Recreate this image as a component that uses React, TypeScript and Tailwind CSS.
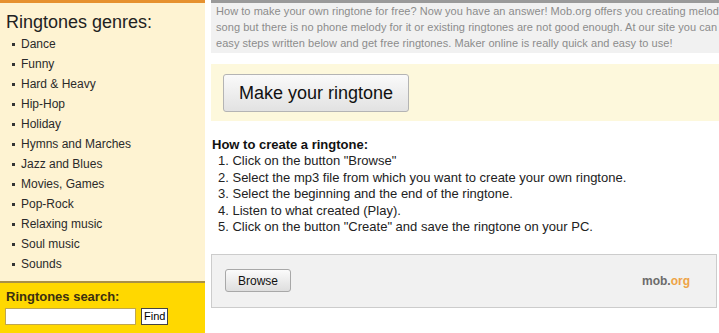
import React from 'react';

const genres = [
  'Dance',
  'Funny',
  'Hard & Heavy',
  'Hip-Hop',
  'Holiday',
  'Hymns and Marches',
  'Jazz and Blues',
  'Movies, Games',
  'Pop-Rock',
  'Relaxing music',
  'Soul music',
  'Sounds',
];

const steps = [
  'Click on the button "Browse"',
  'Select the mp3 file from which you want to create your own ringtone.',
  'Select the beginning and the end of the ringtone.',
  'Listen to what created (Play).',
  'Click on the button "Create" and save the ringtone on your PC.',
];

export default function App() {
  return (
    <div className="w-[719px] h-[333px] overflow-hidden flex bg-white font-['Liberation_Sans',Arial,sans-serif]">
      {/* Sidebar */}
      <div className="w-[205px] shrink-0 flex flex-col">
        <div className="flex-1 bg-[#fef3d2] border-t-[3px] border-[#e6912f] pt-[9px]">
          <h2 className="pl-[6px] text-[18px] leading-[21px] text-[#222]">Ringtones genres:</h2>
          <ul className="mt-[1px]">
            {genres.map((g) => (
              <li key={g} className="flex items-center h-[20px] text-[12px] text-[#2a2a2a]">
                <span className="ml-[12px] mr-[6px] w-[3px] h-[3px] bg-[#333]"></span>
                {g}
              </li>
            ))}
          </ul>
        </div>
        <div className="h-[52px] bg-[#ffd800] border-t-2 border-[#a89048] pt-[6px] pl-[5px]">
          <div className="text-[13px] leading-[16px] font-bold text-[#3b2f10] pl-[1px]">Ringtones search:</div>
          <div className="flex items-center mt-[3px] gap-[5px]">
            <input
              type="text"
              className="w-[131px] h-[17px] bg-white border border-[#bfa650] outline-none"
            />
            <button className="h-[17px] px-[2px] bg-white border border-[#444] text-[11px] leading-[15px] text-black">
              Find
            </button>
          </div>
        </div>
      </div>

      {/* Main */}
      <div className="w-[560px] shrink-0 ml-[6px]">
        <div className="border-t-[3px] border-[#9a9a9a] bg-[#f1f1f1] pb-[2px] pl-[5px] text-[11px] leading-[16px] tracking-[0.05px] text-[#8c8c8c] whitespace-nowrap">
          <p>How to make your own ringtone for free? Now you have an answer! Mob.org offers you creating melody for your favorite</p>
          <p>song but there is no phone melody for it or existing ringtones are not good enough. At our site you can make it in a few</p>
          <p>easy steps written below and get free ringtones. Maker online is really quick and easy to use!</p>
        </div>

        <div className="mt-[11px] bg-[#fdf8dc] pt-[10px] pb-[9px] pl-[12px]">
          <button className="w-[186px] h-[38px] rounded-[3px] border border-[#b4b4b4] bg-gradient-to-b from-[#fafafa] to-[#e2e2e2] text-[18px] text-[#111]">
            Make your ringtone
          </button>
        </div>

        <div className="mt-[16px] pl-[1px]">
          <h3 className="text-[13px] leading-[16px] font-bold text-[#111]">How to create a ringtone:</h3>
          <ol className="text-[13px] leading-[16.5px] text-[#222] pl-[6px]">
            {steps.map((s, i) => (
              <li key={i}>
                {i + 1}. {s}
              </li>
            ))}
          </ol>
        </div>

        <div className="mt-[18px] w-[506px] h-[54px] bg-[#f1f1f1] border border-[#cccccc] flex items-center justify-between pl-[13px] pr-[26px]">
          <button className="w-[66px] h-[23px] rounded-[3px] border border-[#a8a8a8] bg-gradient-to-b from-[#fbfbfb] to-[#dedede] text-[12px] text-[#111]">
            Browse
          </button>
          <span className="text-[12px] font-bold text-[#6b6b6b]">
            mob.<span className="text-[#eea346]">org</span>
          </span>
        </div>
      </div>
    </div>
  );
}
